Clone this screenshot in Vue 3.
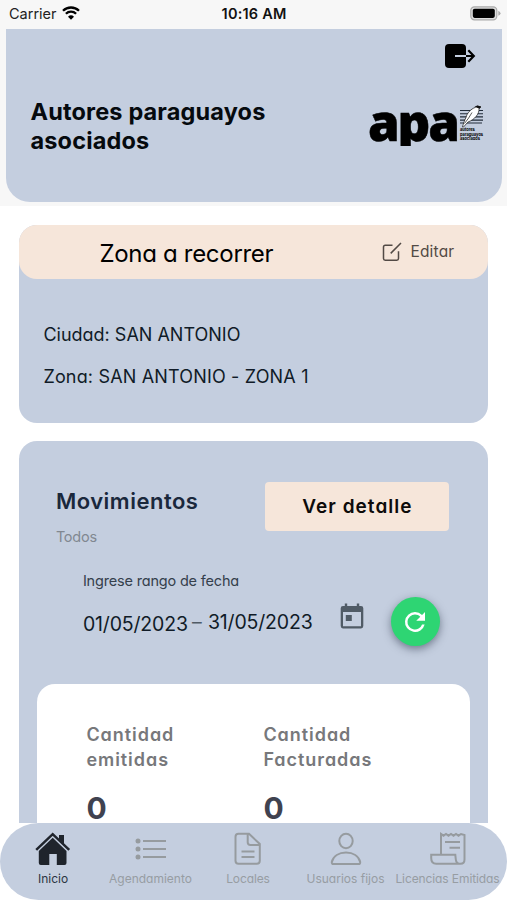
<script setup>
const totals = [
  { id: 'issued', lines: ['Cantidad', 'emitidas'], value: 0 },
  { id: 'billed', lines: ['Cantidad', 'Facturadas'], value: 0 },
]
</script>

<template>
  <div class="screen">
    <div class="top">
      <div class="status">
        <div class="carrier">
          <span>Carrier</span>
          <svg class="wifi" width="18" height="14" viewBox="0 0 18 14">
            <path d="M1 4.8a11.4 11.4 0 0 1 16 0M3.9 7.8a7.2 7.2 0 0 1 10.2 0" fill="none" stroke="#000" stroke-width="2.3" />
            <path d="M9 13.8 6 10.7a4.3 4.3 0 0 1 6 0z" />
          </svg>
        </div>
        <time class="clock">10:16 AM</time>
        <svg class="battery" width="31" height="15" viewBox="0 0 31 15">
          <rect x=".8" y=".8" width="26" height="13" rx="3.6" fill="#dedede" stroke="#aaa" stroke-width="1.2" />
          <rect x="2.8" y="2.7" width="22" height="9.2" rx="1.8" />
          <path d="M28.3 4.8q2.2 1 2.2 2.5t-2.2 2.5z" fill="#aaa" />
        </svg>
      </div>

      <header class="header">
        <svg class="logout" width="32" height="26" viewBox="0 0 32 26">
          <rect x="1" y="1" width="21" height="24" rx="4" />
          <path d="M11 13h11" stroke="#c4cedf" stroke-width="2" />
          <path d="M22 13h7.5M24.3 7.3l5.5 5.7-5.5 5.7" fill="none" stroke="#000" stroke-width="2.2" />
        </svg>
        <div class="brand">
          <h1 class="title">Autores paraguayos<br />asociados</h1>
          <div class="logo">
            <span class="logo-name">apa</span>
            <div class="logo-side">
              <svg width="24" height="23" viewBox="0 0 24 23">
                <path d="M0 5.5h23M0 8.7h23M0 11.9h23M0 15.1h23M0 18h22" stroke="#222d3a" stroke-width="1.1" />
                <path d="M2.5 22c1-4 2-6.500 3.500-9.500C7 8 11 4 15 2.500l2-1.500 4 1-2 1.500c.5 5-4 11-11 13.500L3.500 22z" fill="#fff" stroke="#111" stroke-width=".7" />
                <path d="m14.500 1.800 3-1.300 3.500 1-1.500 2.300z" fill="#111" />
                <path d="M4.500 18.500Q9 13 12 7.500" fill="none" stroke="#333" stroke-width=".8" />
              </svg>
              <div class="logo-caption">autores<br />paraguayos<br />asociados</div>
            </div>
          </div>
        </div>
      </header>
    </div>

    <main class="content">
      <section class="card zone">
        <div class="zone-head">
          <h2 class="zone-title">Zona a recorrer</h2>
          <button class="edit">
            <svg width="20" height="20" viewBox="0 0 20 20">
              <path d="M10.500 3.300H3.200Q1.500 3.300 1.500 5v11.600q0 1.700 1.700 1.700h11.600q1.700 0 1.700-1.700V9.300M8.700 11.400 19 1" fill="none" stroke="#524a45" stroke-width="1.500" />
            </svg>
            <span>Editar</span>
          </button>
        </div>
        <div class="zone-body">
          <p class="city">Ciudad: SAN ANTONIO</p>
          <p class="area">Zona: SAN ANTONIO - ZONA 1</p>
        </div>
      </section>

      <section class="card moves">
        <div class="moves-head">
          <div>
            <h2 class="moves-title">Movimientos</h2>
            <p class="moves-sub">Todos</p>
          </div>
          <button class="detail">Ver detalle</button>
        </div>
        <div class="range">
          <div class="range-fields">
            <label class="range-label">Ingrese rango de fecha</label>
            <div class="dates">
              <span class="from">01/05/2023</span>
              <span class="dash">–</span>
              <span class="to">31/05/2023</span>
            </div>
          </div>
          <svg class="calendar" width="24" height="26" viewBox="0 0 24 26">
            <path fill-rule="evenodd" d="M3 3h1.800V.5h2.400V3h9.600V.5h2.400V3H21a2.300 2.300 0 0 1 2.300 2.300v17.800a2.300 2.300 0 0 1-2.300 2.300H3a2.300 2.300 0 0 1-2.300-2.300V5.300A2.300 2.300 0 0 1 3 3zm0 6v14.200h18V9z" fill="#505b66" />
            <rect x="5.800" y="12" width="6" height="6" fill="#505b66" />
          </svg>
          <button class="refresh">
            <svg width="30" height="30" viewBox="0 0 24 24">
              <path d="M17.650 6.350A7.960 7.960 0 0 0 12 4a8 8 0 1 0 7.730 10h-2.080A6 6 0 1 1 12 6c1.660 0 3.140.69 4.220 1.780L13 11h7V4z" fill="#fff" />
            </svg>
          </button>
        </div>
        <div class="totals">
          <div v-for="t in totals" :key="t.id" class="total">
            <p class="total-label">{{ t.lines[0] }}<br />{{ t.lines[1] }}</p>
            <p class="total-value">{{ t.value }}</p>
          </div>
        </div>
      </section>
    </main>

    <nav class="tabs">
      <a class="tab active">
        <svg width="36" height="34" viewBox="0 0 36 34">
          <path d="M1.200 17.800 17.700 2.200l16.500 15.600" fill="none" stroke="#1f242c" stroke-width="2.500" />
          <path d="M24 3h5v9.300l-5-4.700zM17.700 5.800 31.500 19v12q0 2-2 2h-7.700V22h-7.500v11H5.800q-2 0-2-2V19z" fill="#1f242c" />
        </svg>
        <span>Inicio</span>
      </a>
      <a class="tab">
        <svg width="36" height="34" viewBox="0 0 36 34">
          <path d="M10 9h23M10 17h23M10 25h23" stroke="#969b9f" stroke-width="1.900" />
          <g fill="#969b9f"><circle cx="5" cy="9" r="2.500" /><circle cx="5" cy="17" r="2.500" /><circle cx="5" cy="25" r="2.500" /></g>
        </svg>
        <span>Agendamiento</span>
      </a>
      <a class="tab">
        <svg width="36" height="34" viewBox="0 0 36 34" fill="none" stroke="#969b9f" stroke-width="2">
          <path d="M19 1.800H8.500q-3 0-3 3v24q0 3 3 3h18.300q3 0 3-3V12zM17.700 1.800v8.500q0 2.700 2.700 2.700h9.300M11.500 19.500h13M11.500 25h13" />
        </svg>
        <span class="tight">Locales</span>
      </a>
      <a class="tab">
        <svg width="36" height="34" viewBox="0 0 36 34" fill="none" stroke="#969b9f" stroke-width="2">
          <ellipse cx="18" cy="9" rx="6.700" ry="7.300" />
          <path d="M5.500 32q-2 0-1.700-2C5.300 24 11 20.600 18 20.600S30.700 24 32.200 30q.3 2-1.700 2z" />
        </svg>
        <span>Usuarios fijos</span>
      </a>
      <a class="tab">
        <svg width="36" height="34" viewBox="0 0 36 34" fill="none" stroke="#969b9f" stroke-width="2">
          <path d="M11 22.700V2l2.500 1.700L16 2l2.500 1.700L21 2l2.500 1.700L26 2l2.500 1.700L31 2l3.500 1v24.500q0 4.300-4 4.300-4.300 0-4.700-4.300l-.5-4.800H1.200v3.300q0 5.800 5 5.800H31M15 10h15M19.500 15.700H30" />
        </svg>
        <span class="tight">Licencias Emitidas</span>
      </a>
    </nav>
  </div>
</template>

<style>
body {
  background: #fff;
}
</style>

<style scoped>
* {
  box-sizing: border-box;
}
h1, h2, p {
  margin: 0;
}
button {
  border: 0;
  padding: 0;
  font: inherit;
}
svg {
  display: block;
  flex: none;
}
.screen {
  width: 507px;
  height: 900px;
  overflow: hidden;
  display: flex;
  flex-direction: column;
  background: #fff;
  font-family: Inter, "Open Sans", sans-serif;
  font-feature-settings: "cv11";
  white-space: nowrap;
}
.top {
  flex: none;
  height: 206px;
  padding: 0 5px 0 6px;
  background: #f7f7f7;
  font-feature-settings: normal;
}
.status {
  height: 29px;
  display: grid;
  grid-template-columns: 1fr auto 1fr;
  align-items: start;
  color: #222;
  font-size: 14.5px;
  line-height: 28px;
}
.carrier {
  display: flex;
  gap: 5px;
  padding-left: 3px;
}
.wifi {
  margin-top: 6px;
}
.clock {
  font-weight: 600;
  letter-spacing: 0.2px;
  color: #111;
}
.battery {
  justify-self: end;
  margin: 6px 1px 0 0;
}
.header {
  height: 173px;
  padding: 14px 18px 0 24.5px;
  background: #c4cedf;
  border-radius: 0 0 24px 24px;
}
.logout {
  margin-left: auto;
  margin-right: 8px;
}
.brand {
  display: flex;
  justify-content: space-between;
  margin-top: 28px;
}
.title {
  font-size: 23.5px;
  font-weight: 700;
  line-height: 29px;
  letter-spacing: 0.15px;
  color: #060a0e;
}
.logo {
  display: flex;
  margin-top: 8px;
}
.logo-name {
  width: 92px;
  height: 41px;
  overflow: hidden;
  font-family: "Open Sans", "Noto Sans", sans-serif;
  font-weight: 800;
  font-size: 51px;
  line-height: 32px;
  letter-spacing: -2.2px;
  -webkit-text-stroke: 0.5px #000;
}
.logo-side {
  width: 24px;
}
.logo-caption {
  font-size: 4px;
  line-height: 4.5px;
  font-weight: 700;
}
.content {
  flex: 1;
  min-height: 0;
  overflow: hidden;
  padding: 19px 18.6px 0 19.4px;
  display: flex;
  flex-direction: column;
  gap: 18.5px;
}
.card {
  flex: none;
  background: #c4cedf;
  border-radius: 18px;
}
.zone {
  height: 197.500px;
}
.zone-head {
  height: 53.500px;
  padding: 0 34px 0 80px;
  display: flex;
  align-items: center;
  justify-content: space-between;
  background: #f6e6da;
  border-radius: 18px;
}
.zone-title {
  font-size: 24px;
  font-weight: 400;
  line-height: 30px;
  letter-spacing: -0.3px;
  padding-top: 4px;
}
.edit {
  display: flex;
  align-items: center;
  gap: 8px;
  padding-top: 1px;
  background: none;
  font-size: 15.500px;
  line-height: 20px;
  letter-spacing: 0.2px;
  color: #524a45;
}
.zone-body {
  padding: 44px 24px 0;
  font-size: 18px;
  line-height: 24px;
  color: #101b27;
}
.area {
  margin-top: 18px;
  letter-spacing: 0.17px;
}
.moves {
  height: 460px;
  padding: 41px 18px 0;
}
.moves-head {
  display: flex;
  justify-content: space-between;
  padding: 0 21px 0 18.500px;
}
.moves-title {
  padding-top: 5px;
  font-size: 22px;
  font-weight: 600;
  line-height: 28px;
  letter-spacing: 0.5px;
  color: #1a283c;
}
.moves-sub {
  margin-top: 12px;
  font-size: 14.500px;
  line-height: 20px;
  letter-spacing: -0.25px;
  color: #818891;
}
.detail {
  width: 184px;
  height: 49px;
  background: #f6e6da;
  border-radius: 4px;
  color: #0d0b0a;
  font-size: 19px;
  font-weight: 600;
  letter-spacing: 1.050px;
}
.range {
  display: flex;
  padding-left: 45.500px;
  margin-top: 24px;
  height: 113px;
}
.range-fields {
  width: 257px;
}
.range-label {
  display: block;
  font-size: 14.500px;
  line-height: 20px;
  letter-spacing: -0.18px;
  color: #35404c;
}
.dates {
  display: flex;
  align-items: flex-start;
  margin-top: 18px;
  font-size: 19.500px;
  line-height: 26px;
  letter-spacing: -0.17px;
  color: #101b27;
}
.from {
  width: 109px;
  padding-top: 2px;
}
.dash {
  width: 16px;
  color: #505b66;
}
.calendar {
  margin-top: 32px;
}
.refresh {
  display: grid;
  place-items: center;
  width: 49px;
  height: 49px;
  margin: 26px 0 0 27px;
  border-radius: 50%;
  background: #2ed573;
  box-shadow: 0 3px 8px rgba(30, 40, 60, 0.5);
}
.totals {
  height: 180px;
  padding: 39px 0 0 49px;
  display: flex;
  background: #fff;
  border-radius: 18px 18px 0 0;
}
.total {
  width: 177px;
}
.total-label {
  font-size: 18px;
  font-weight: 600;
  line-height: 24.500px;
  letter-spacing: 0.95px;
  color: #77787b;
}
.total-value {
  margin-top: 22px;
  font-size: 30px;
  font-weight: 700;
  line-height: 28px;
  color: #3f4250;
}
.tabs {
  flex: none;
  height: 77.500px;
  padding: 9px 6px 0 4px;
  display: grid;
  grid-template-columns: 98px 97px 98px 97px 1fr;
  background: #c4cedf;
  border-radius: 39px;
}
.tab {
  display: flex;
  flex-direction: column;
  align-items: center;
  gap: 4px;
  font-size: 12px;
  line-height: 18px;
  color: #979da3;
}
.tight {
  letter-spacing: -0.1px;
}
.active {
  color: #2c3542;
}
</style>
